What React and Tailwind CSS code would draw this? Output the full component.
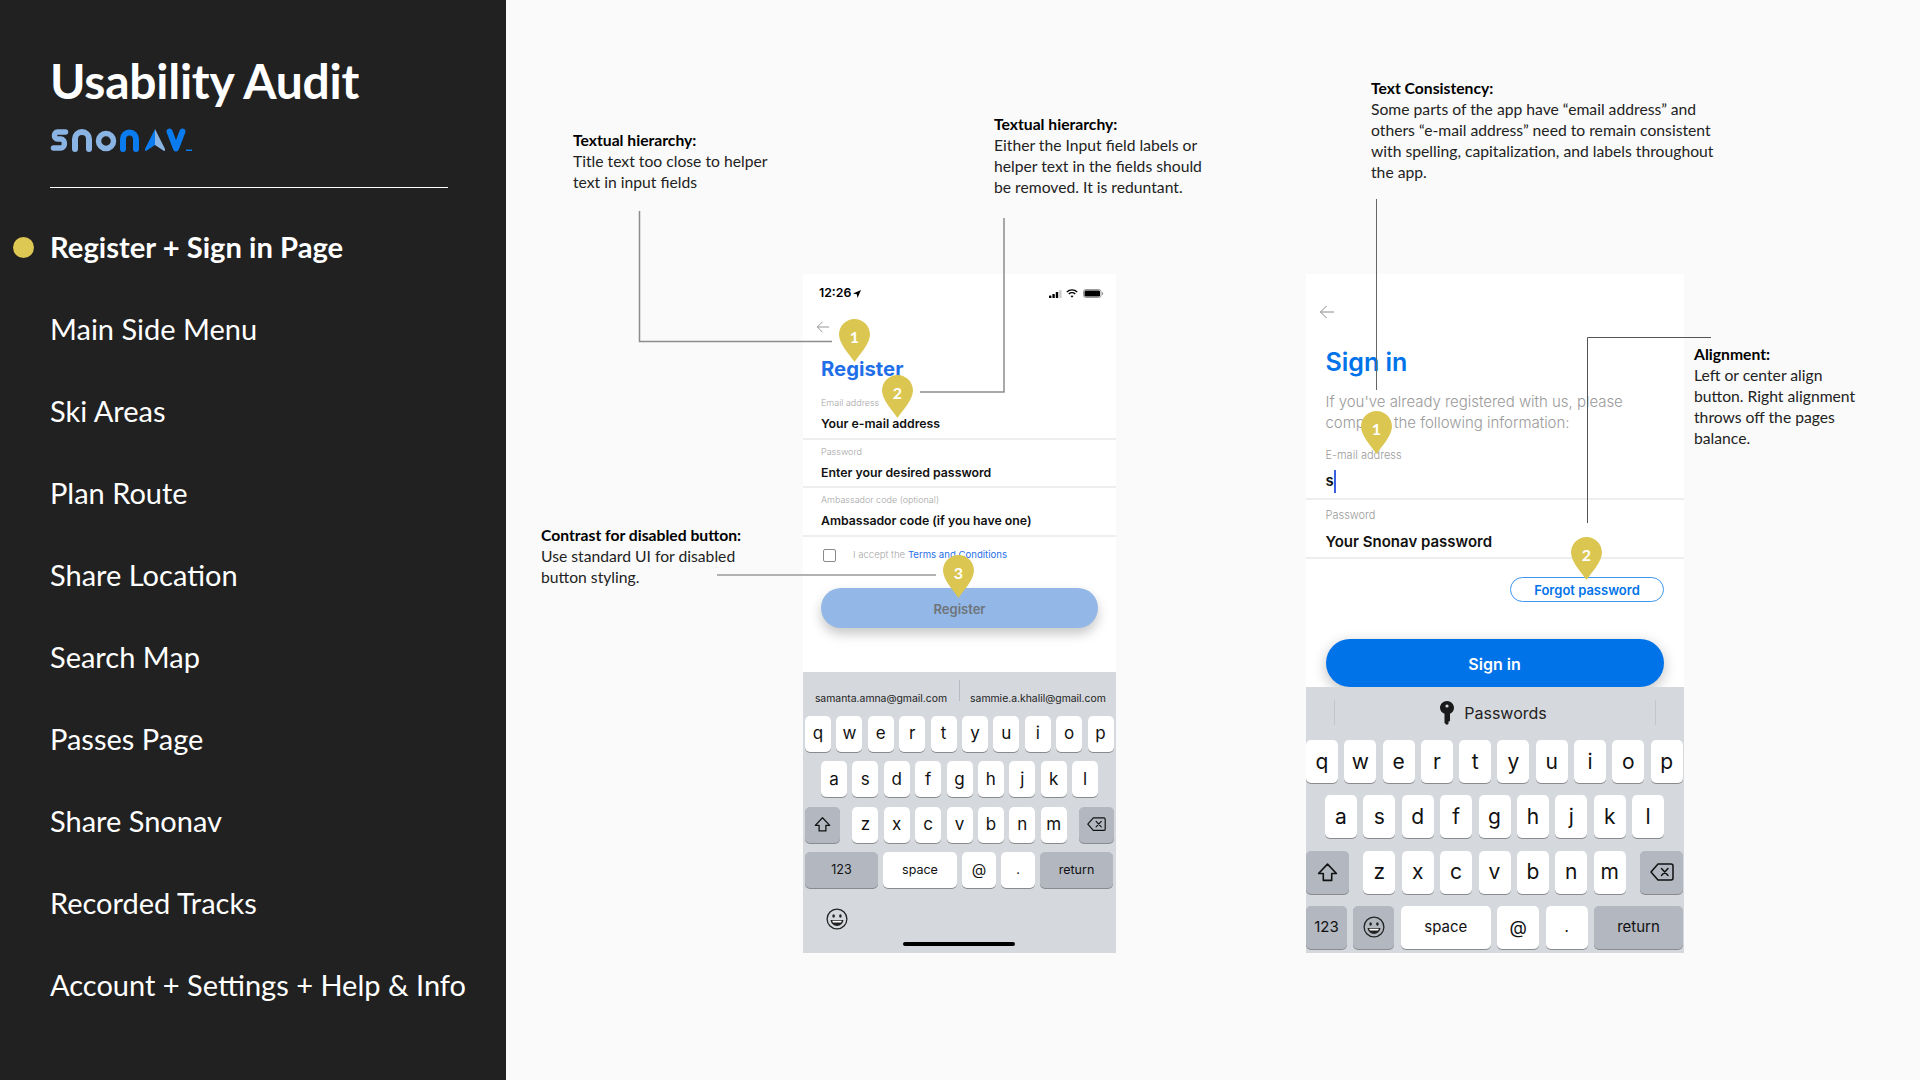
import React from 'react';

const NAV = [
  'Register + Sign in Page',
  'Main Side Menu',
  'Ski Areas',
  'Plan Route',
  'Share Location',
  'Search Map',
  'Passes Page',
  'Share Snonav',
  'Recorded Tracks',
  'Account + Settings + Help & Info',
];

const Logo = () => (
  <svg width="142" height="24" viewBox="0 0 142 24" fill="none" className="block mt-[16px]">
    <path d="M15.5 4 H7.5 C3.5 4 3.5 11 7.5 11 H11 C15.5 11 15.5 20 11 20 H3.5" stroke="#8ab4e3" strokeWidth="5.5" strokeLinecap="round" />
    <path d="M25 21 V11 a7 7 0 0 1 14 0 V21" stroke="#8ab4e3" strokeWidth="6" strokeLinecap="round" />
    <circle cx="56" cy="13" r="7.5" stroke="#8ab4e3" strokeWidth="5.5" />
    <path d="M73 21 V11 a6.5 6.5 0 0 1 13 0 V21" stroke="#0a7cf0" strokeWidth="6" strokeLinecap="round" />
    <path d="M105 1 L105 17 L96 23 Q94.5 23 95 21 Z" fill="#0a7cf0" />
    <path d="M105 1 L105 17 L114 23 Q115.5 23 115 21 Z" fill="#8ab4e3" />
    <path d="M119.5 3.5 L126 20.5 L132.5 3.5" stroke="#0a7cf0" strokeWidth="6" strokeLinecap="round" strokeLinejoin="round" />
    <rect x="136" y="21.5" width="6" height="1.5" fill="#0a7cf0" />
  </svg>
);

const Sidebar = () => (
  <aside className="w-[506px] h-full shrink-0 bg-[#212121] text-white font-['Lato',sans-serif]">
    <div className="pl-[50px] pt-[50px]">
      <h1 className="text-[48px] leading-[62px] font-bold tracking-[-0.25px] m-0">Usability Audit</h1>
      <Logo />
      <div className="w-[398px] h-px bg-white mt-[35px]" />
    </div>
    <ul className="mt-[18px]">
      {NAV.map((item, i) => (
        <li key={item} className="flex items-center h-[82px] pl-[13px] gap-[16px]">
          <span className={i === 0 ? 'w-[21px] h-[21px] rounded-full bg-[#dcc853]' : 'w-[21px] h-[21px]'} />
          <span className={i === 0 ? 'text-[29.2px] font-bold' : 'text-[29px] font-normal whitespace-nowrap'}>{item}</span>
        </li>
      ))}
    </ul>
  </aside>
);

const Note = ({ title, lines, className }) => (
  <div className={`absolute text-[15.7px] leading-[21px] text-[#222] font-['Lato',sans-serif] whitespace-nowrap ${className}`}>
    <div className="font-bold text-black">{title}</div>
    {lines.map((l) => (
      <div key={l}>{l}</div>
    ))}
  </div>
);

const Pin = ({ n, className }) => (
  <div className={`absolute w-[31px] h-[43px] ${className}`}>
    <svg width="31" height="43" viewBox="0 0 31 43" className="absolute inset-0">
      <path d="M15.5 0 C24 0 31 7 31 15.5 C31 25 20 36 15.5 43 C11 36 0 25 0 15.5 C0 7 7 0 15.5 0Z" fill="#dbc652" />
    </svg>
    <span className="absolute inset-x-0 top-[7px] text-center text-white text-[16px] leading-[22px] font-bold font-['Lato',sans-serif]">{n}</span>
  </div>
);

const Arrow = ({ size = 14 }) => (
  <svg width={size} height={size} viewBox="0 0 16 16" fill="none" stroke="#8a8a8a" strokeWidth="1">
    <path d="M15 8 H1.5 M7.5 2 L1.5 8 L7.5 14" />
  </svg>
);

const StatusBar = () => (
  <div className="h-[38px] flex items-center justify-between pl-[16px] pr-[13px] pt-[1px]">
    <div className="flex items-center gap-[2px] text-[12.3px] font-semibold text-black">
      12:26
      <svg width="8" height="8" viewBox="0 0 8 8"><path d="M8 0 L0 3.5 L3.8 4.2 L4.5 8 Z" fill="#000" /></svg>
    </div>
    <div className="flex items-center gap-[4px]">
      <svg width="13" height="8" viewBox="0 0 13 8">
        <rect x="0" y="5.5" width="2.4" height="2.5" rx="0.6" fill="#000" />
        <rect x="3.4" y="4" width="2.4" height="4" rx="0.6" fill="#000" />
        <rect x="6.8" y="2" width="2.4" height="6" rx="0.6" fill="#000" />
        <rect x="10.2" y="0" width="2.4" height="8" rx="0.6" fill="#ccc" />
      </svg>
      <svg width="12" height="9" viewBox="0 0 12 9" fill="none" stroke="#000" strokeWidth="1.4">
        <path d="M0.8 3 C3.8 0.2 8.2 0.2 11.2 3" />
        <path d="M2.8 5 C4.6 3.4 7.4 3.4 9.2 5" />
        <path d="M6 8.8 L4.5 7 C5.4 6.2 6.6 6.2 7.5 7 Z" fill="#000" stroke="none" />
      </svg>
      <svg width="20" height="9" viewBox="0 0 20 9" className="ml-[1px]">
        <rect x="0.5" y="0.5" width="17.5" height="8" rx="2.2" fill="none" stroke="#999" />
        <rect x="1.5" y="1.5" width="15.5" height="6" rx="1.2" fill="#000" />
        <rect x="19" y="3" width="1" height="3" rx="0.5" fill="#999" />
      </svg>
    </div>
  </div>
);

const Field = ({ label, value, className }) => (
  <div className={`border-b-2 border-[#eeeeee] pl-[18px] ${className}`}>
    <div className="text-[9px] leading-[12px] text-[#a6a6a6] font-light">{label}</div>
    <div className="mt-[7px] text-[12.3px] leading-[16px] font-semibold text-[#111]">{value}</div>
  </div>
);

const Key = ({ children, dark, className = '', text = 'text-[17px]' }) => (
  <div
    className={`flex items-center justify-center rounded-[5px] shadow-[0_1px_0_#8a8b8e] text-[#111] ${text} ${
      dark ? 'bg-[#b2b7c0]' : 'bg-white'
    } ${className}`}
  >
    {children}
  </div>
);

const ShiftIcon = ({ size }) => (
  <svg width={size} height={size} viewBox="0 0 20 20" fill="none" stroke="#111" strokeWidth="1.5" strokeLinejoin="round">
    <path d="M10 2 L18.5 11 H14 V17.5 H6 V11 H1.5 Z" />
  </svg>
);

const DeleteIcon = ({ size }) => (
  <svg width={size} height={size * 0.75} viewBox="0 0 24 18" fill="none" stroke="#111" strokeWidth="1.5" strokeLinejoin="round" strokeLinecap="round">
    <path d="M8 1 H21 a2 2 0 0 1 2 2 V15 a2 2 0 0 1 -2 2 H8 L1 9 Z" />
    <path d="M11.5 5.5 L18 12.5 M18 5.5 L11.5 12.5" />
  </svg>
);

const SmileIcon = ({ size }) => (
  <svg width={size} height={size} viewBox="0 0 24 24" fill="none" stroke="#222" strokeWidth="1.4">
    <circle cx="12" cy="12" r="10.8" />
    <ellipse cx="8.3" cy="8.8" rx="1.4" ry="1.9" fill="#222" stroke="none" />
    <ellipse cx="15.7" cy="8.8" rx="1.4" ry="1.9" fill="#222" stroke="none" />
    <path d="M5 13 H19 C18.6 17 15.5 19.5 12 19.5 C8.5 19.5 5.4 17 5 13 Z" fill="#222" stroke="none" />
    <path d="M6.8 14 H17.2 C17 15 16.8 15.3 16.4 15.8 H7.6 C7.2 15.3 7 15 6.8 14 Z" fill="#fff" stroke="none" />
  </svg>
);

const R1 = 'qwertyuiop'.split('');
const R2 = 'asdfghjkl'.split('');
const R3 = 'zxcvbnm'.split('');

const SmallKeyboard = () => (
  <div className="flex-1 bg-[#d5d8dd] font-['Inter',sans-serif]">
    <div className="h-[44px] flex items-start pt-[8px] relative text-[10.4px] text-[#222]">
      <div className="w-[156px] text-center leading-[21px] pt-[8px]">samanta.amna@gmail.com</div>
      <div className="w-px h-[21px] bg-[#b8bbc1]" />
      <div className="flex-1 text-center leading-[21px] pt-[8px]">sammie.a.khalil@gmail.com</div>
    </div>
    <div className="flex flex-col gap-[9.3px] px-[2px]">
      <div className="flex h-[36px] gap-[5.4px]">
        {R1.map((k) => <Key key={k} className="w-[26px]">{k}</Key>)}
      </div>
      <div className="flex h-[36px] gap-[5.4px] justify-center">
        {R2.map((k) => <Key key={k} className="w-[26px]">{k}</Key>)}
      </div>
      <div className="flex h-[36px] justify-between">
        <Key dark className="w-[35px]"><ShiftIcon size={17} /></Key>
        <div className="flex gap-[5.4px]">
          {R3.map((k) => <Key key={k} className="w-[26px]">{k}</Key>)}
        </div>
        <Key dark className="w-[35px]"><DeleteIcon size={19} /></Key>
      </div>
      <div className="flex h-[36px] gap-[5px]">
        <Key dark text="text-[12.5px]" className="w-[73px]">123</Key>
        <Key text="text-[12.5px]" className="w-[74px]">space</Key>
        <Key text="text-[15px]" className="w-[34px]">@</Key>
        <Key text="text-[12.5px]" className="w-[34px]">.</Key>
        <Key dark text="text-[12.5px]" className="w-[73px]">return</Key>
      </div>
    </div>
    <div className="pl-[23px] pt-[20px] h-[52px]"><SmileIcon size={22} /></div>
    <div className="w-[112px] h-[4px] rounded-full bg-black ml-[100px] mt-[2px]" />
  </div>
);

const LargeKeyboard = () => (
  <div className="flex-1 bg-[#d5d8dd] font-['Inter',sans-serif]">
    <div className="h-[53px] relative flex items-center justify-center pb-[1px] gap-[10px] text-[16px] text-[#222]">
      <span className="absolute left-[28px] top-[13px] w-px h-[25px] bg-[#c3c6cb]" />
      <span className="absolute left-[349px] top-[13px] w-px h-[25px] bg-[#c3c6cb]" />
      <svg width="14" height="24" viewBox="0 0 14 24" className="-ml-[3px]">
        <path d="M7 0 C10.8 0 14 3 14 6.8 C14 9.5 12.3 11.8 10 12.8 V20 L8 21 L9 22 L7 24 L4.5 22 V12.8 C1.9 11.8 0 9.5 0 6.8 C0 3 3.2 0 7 0 Z" fill="#1a1a1a" />
        <circle cx="7" cy="5" r="1.6" fill="#d5d8dd" />
      </svg>
      Passwords
    </div>
    <div className="flex flex-col gap-[12.3px]">
      <div className="flex h-[43px] gap-[6.3px]">
        {R1.map((k) => <Key key={k} text="text-[21px]" className="w-[32px]">{k}</Key>)}
      </div>
      <div className="flex h-[43px] gap-[6.4px] justify-center pr-[1px]">
        {R2.map((k) => <Key key={k} text="text-[21px]" className="w-[32px]">{k}</Key>)}
      </div>
      <div className="flex h-[43px] justify-between pr-[1px]">
        <Key dark className="w-[43px]"><ShiftIcon size={21} /></Key>
        <div className="flex gap-[6.4px]">
          {R3.map((k) => <Key key={k} text="text-[21px]" className="w-[32px]">{k}</Key>)}
        </div>
        <Key dark className="w-[43px]"><DeleteIcon size={24} /></Key>
      </div>
      <div className="flex h-[43px] gap-[6.4px] pr-[1px]">
        <Key dark text="text-[15px]" className="w-[41px]">123</Key>
        <Key dark className="w-[41px]"><SmileIcon size={22} /></Key>
        <Key text="text-[15px]" className="w-[90px]">space</Key>
        <Key text="text-[18px]" className="w-[42px]">@</Key>
        <Key text="text-[15px]" className="w-[42px]">.</Key>
        <Key dark text="text-[15px]" className="flex-1">return</Key>
      </div>
    </div>
  </div>
);

const RegisterPhone = () => (
  <section className="absolute left-[803px] top-[274px] w-[313px] h-[679px] bg-white flex flex-col font-['Inter',sans-serif]">
    <StatusBar />
    <div className="h-[30px] pl-[13px] flex items-center"><Arrow size={14} /></div>
    <h2 className="h-[54px] -mb-[2px] pl-[18px] flex items-center text-[20.3px] font-bold text-[#1f6fe8] m-0">Register</h2>
    <Field label="Email address" value="Your e-mail address" className="h-[46px] pt-[3px]" />
    <Field label="Password" value="Enter your desired password" className="h-[48px] pt-[6px]" />
    <Field label="Ambassador code (optional)" value="Ambassador code (if you have one)" className="h-[49px] pt-[6px]" />
    <div className="h-[36px] pl-[20px] pt-[1px] flex items-center text-[9.6px]">
      <span className="w-[13px] h-[13px] rounded-[2px] border border-[#8a8a8a] mr-[17px]" />
      <span className="text-[#a6a6a6] font-light">I accept the&nbsp;</span>
      <span className="text-[#1f6fe8]">Terms and Conditions</span>
    </div>
    <button className="mx-[18px] mt-[15px] h-[40px] pt-[3px] rounded-full bg-[#93b7e6] text-[13px] font-semibold text-[#6f747a] shadow-[0_6px_12px_rgba(0,0,0,0.22)]">
      Register
    </button>
    <div className="h-[44px] shrink-0" />
    <SmallKeyboard />
  </section>
);

const SignInPhone = () => (
  <section className="absolute left-[1306px] top-[274px] w-[378px] h-[679px] bg-white flex flex-col font-['Inter',sans-serif]">
    <div className="h-[62px] pl-[13px] pt-[30px]"><Arrow size={16} /></div>
    <h2 className="h-[54px] -mb-[2px] pl-[19.5px] flex items-center text-[25px] font-semibold text-[#0073e9] m-0">Sign in</h2>
    <p className="pl-[19.5px] mt-[3px] text-[15px] leading-[21px] font-light text-[#9a9a9a] m-0 whitespace-nowrap tracking-[-0.03px]">
      If you&apos;ve already registered with us, please
      <br />
      complete the following information:
    </p>
    <div className="h-[67px] border-b-2 border-[#eeeeee] pl-[19.5px] pt-[16px]">
      <div className="text-[11px] leading-[12px] font-light text-[#9a9a9a]">E-mail address</div>
      <div className="mt-[9px] flex items-center h-[23px] text-[15px] font-semibold text-[#111]">
        s<span className="w-[2px] h-[23px] bg-[#3a5fe0]" />
      </div>
    </div>
    <div className="h-[59px] border-b-2 border-[#eeeeee] pl-[19.5px] pt-[9px]">
      <div className="text-[11px] leading-[12px] font-light text-[#9a9a9a]">Password</div>
      <div className="mt-[11px] text-[15px] leading-[20px] font-semibold text-[#111]">Your Snonav password</div>
    </div>
    <div className="flex justify-end pr-[20px] pt-[18px]">
      <button className="w-[154px] h-[25px] pt-[2px] rounded-full border border-[#3f96f0] bg-white text-[13px] font-semibold text-[#0073e9]">
        Forgot password
      </button>
    </div>
    <button className="ml-[19.5px] mr-[20.5px] mt-[37px] h-[48px] pt-[1px] shrink-0 rounded-full bg-[#0073e9] text-white text-[16px] font-semibold shadow-[0_4px_14px_rgba(0,0,0,0.25)]">
      Sign in
    </button>
    <LargeKeyboard />
  </section>
);

// leader lines between the notes and the pins
const Leaders = () => (
  <svg width="1920" height="1080" className="absolute inset-0 pointer-events-none" fill="none">
    <path d="M639.5 211 V341.5 H832" stroke="#8c8c8c" strokeWidth="1.5" />
    <path d="M1004 218 V392 H920" stroke="#8c8c8c" strokeWidth="1.5" />
    <path d="M717 575 H936" stroke="#999" strokeWidth="1.5" />
    <path d="M1376.5 199 V390" stroke="#666" strokeWidth="1" />
    <path d="M1711 337.5 H1587.5 V523" stroke="#555" strokeWidth="1" />
  </svg>
);

export default function App() {
  return (
    <div className="relative flex w-[1920px] h-[1080px] overflow-hidden bg-[#fafafa]">
      <Sidebar />
      <RegisterPhone />
      <SignInPhone />
      <Leaders />
      <Note className="left-[573px] top-[130px]" title="Textual hierarchy:" lines={['Title text too close to helper', 'text in input fields']} />
      <Note className="left-[994px] top-[114px]" title="Textual hierarchy:" lines={['Either the Input field labels or', 'helper text in the fields should', 'be removed. It is reduntant.']} />
      <Note className="left-[1371px] top-[78px]" title="Text Consistency:" lines={['Some parts of the app have “email address” and', 'others “e-mail address” need to remain consistent', 'with spelling, capitalization, and labels throughout', 'the app.']} />
      <Note className="left-[541px] top-[525px]" title="Contrast for disabled button:" lines={['Use standard UI for disabled', 'button styling.']} />
      <Note className="left-[1694px] top-[344px]" title="Alignment:" lines={['Left or center align', 'button. Right alignment', 'throws off the pages', 'balance.']} />
      <Pin n="1" className="left-[839px] top-[319px]" />
      <Pin n="2" className="left-[882px] top-[375px]" />
      <Pin n="3" className="left-[943px] top-[555px]" />
      <Pin n="1" className="left-[1361px] top-[411px]" />
      <Pin n="2" className="left-[1571px] top-[537px]" />
    </div>
  );
}
